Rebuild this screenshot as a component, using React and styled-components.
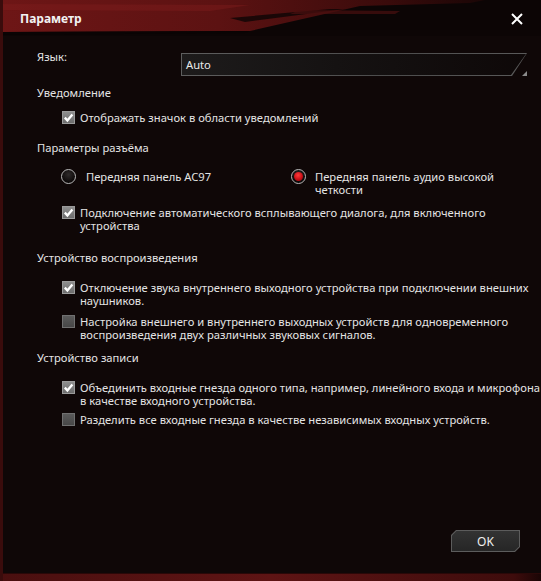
import React from "react";
import styled, { createGlobalStyle } from "styled-components";

const GlobalStyle = createGlobalStyle`
  html, body {
    margin: 0;
    background: #0f0707;
  }
`;

const Window = styled.div`
  width: 541px;
  height: 581px;
  box-sizing: border-box;
  display: flex;
  flex-direction: column;
  background: #0f0707;
  border-left: 3px solid #3a0c0c;
  font-family: "Noto Sans", "Open Sans", sans-serif;
  font-size: 11.2px;
  color: #e4e4e4;
  overflow: hidden;
`;

const TitleBar = styled.div`
  position: relative;
  height: 36px;
  flex-shrink: 0;
  display: flex;
  align-items: center;
  justify-content: space-between;
  margin-left: -3px;
  padding: 0 17px 0 20px;
`;

const TitleDeco = styled.svg`
  position: absolute;
  left: 0;
  top: 0;
  z-index: 0;
`;

const Title = styled.span`
  position: relative;
  z-index: 1;
  font-weight: 700;
  font-size: 12px;
  color: #f2f2f2;
  margin-top: 1px;
`;

const CloseButton = styled.button`
  position: relative;
  z-index: 1;
  width: 14px;
  height: 14px;
  padding: 0;
  border: 0;
  background: transparent;
  display: flex;
  margin-top: 2px;
  cursor: pointer;
`;

const Body = styled.div`
  flex: 1;
  display: flex;
  flex-direction: column;
  padding-left: 34px;
`;

const LangRow = styled.div`
  display: flex;
  margin-top: 17px;
`;

const LangLabel = styled.span`
  width: 144px;
  line-height: 13px;
  margin-top: -3px;
`;

const Select = styled.div`
  position: relative;
  width: 346px;
  height: 23px;
`;

const SelectFrame = styled.div`
  position: absolute;
  inset: 0;
  background: linear-gradient(to right, #5e5e5e, #4c4c4c 60%, #5a5a5a);
  clip-path: polygon(0 0, 100% 0, calc(100% - 15px) 100%, 0 100%);
`;

const SelectInner = styled.div`
  position: absolute;
  inset: 1px;
  background: linear-gradient(to right, #1d1b1b 0%, #151212 45%, #0e0808 100%);
  clip-path: polygon(0 0, 100% 0, calc(100% - 15px) 100%, 0 100%);
  display: flex;
  align-items: center;
  padding-left: 4px;
  color: #eaeaea;
`;

const SelectArrow = styled.div`
  position: absolute;
  right: 0;
  bottom: 0;
  width: 0;
  height: 0;
  border-left: 5px solid transparent;
  border-bottom: 5px solid #8a8a8a;
`;

const Heading = styled.div`
  line-height: 13px;
  margin-top: ${(p) => p.$top}px;
`;

const Row = styled.label`
  display: flex;
  gap: 5px;
  padding-left: 25px;
  line-height: 13px;
  margin-top: ${(p) => p.$top}px;
  white-space: nowrap;
`;

const Box = styled.span`
  width: 13px;
  height: 13px;
  flex-shrink: 0;
  box-sizing: border-box;
  display: flex;
  align-items: center;
  justify-content: center;
  border: 1px solid ${(p) => (p.$checked ? "#9a9a9a" : "#707070")};
  background: ${(p) =>
    p.$checked
      ? "linear-gradient(#8e8e8e, #6c6c6c)"
      : "linear-gradient(#5a5a5a, #474747)"};
`;

const RadioRow = styled.div`
  display: grid;
  grid-template-columns: 230px 1fr;
  padding-left: 24px;
  line-height: 13px;
  margin-top: ${(p) => p.$top}px;
  white-space: nowrap;
`;

const RadioOption = styled.label`
  display: flex;
  gap: ${(p) => p.$gap}px;
`;

const RadioDot = styled.span`
  width: 15px;
  height: 15px;
  flex-shrink: 0;
  box-sizing: border-box;
  margin-top: -1px;
  border-radius: 50%;
  border: 1.5px solid #b8b8b8;
  background: radial-gradient(circle at 50% 35%, #2e2a2a, #0c0808 70%);
  display: flex;
  align-items: center;
  justify-content: center;
`;

const RadioFill = styled.span`
  width: 9px;
  height: 9px;
  border-radius: 50%;
  background: radial-gradient(circle at 45% 35%, #ff3a3a, #c40c14 60%, #8a0008);
`;

const Footer = styled.div`
  margin-top: auto;
  display: flex;
  justify-content: flex-end;
  padding: 0 21px 21px 0;
`;

const OkButton = styled.button`
  position: relative;
  width: 69px;
  height: 22px;
  padding: 0;
  border: 0;
  background: #5c5c5c;
  clip-path: polygon(5px 0, 100% 0, 100% calc(100% - 5px), calc(100% - 5px) 100%, 0 100%, 0 5px);
  cursor: pointer;
`;

const OkFace = styled.span`
  position: absolute;
  inset: 1px;
  display: flex;
  align-items: center;
  justify-content: center;
  background: linear-gradient(#333, #262626);
  clip-path: polygon(4.5px 0, 100% 0, 100% calc(100% - 4.5px), calc(100% - 4.5px) 100%, 0 100%, 0 4.5px);
  font-family: "Noto Sans", sans-serif;
  font-size: 12px;
  color: #f0f0f0;
`;

const BottomBand = styled.div`
  height: 7px;
  flex-shrink: 0;
  margin-left: -3px;
  background: linear-gradient(to right, #4a0f0f, #5e1414 50%, #3e0c0c 95%, #1a0505);
  border-top: 1px solid #2a0808;
`;

const Check = ({ checked }) => (
  <Box $checked={checked}>
    {checked && (
      <svg width="11" height="11" viewBox="0 0 11 11">
        <path d="M1.8 5.6 L4.4 8.4 L9.4 2.4" fill="none" stroke="#fff" strokeWidth="2.3" />
      </svg>
    )}
  </Box>
);

const CheckRow = ({ top, checked, children }) => (
  <Row $top={top}>
    <Check checked={checked} />
    <span>{children}</span>
  </Row>
);

export default function App() {
  return (
    <>
      <GlobalStyle />
      <Window>
        <TitleBar>
          <TitleDeco width="541" height="36" viewBox="0 0 541 36">
            <defs>
              <linearGradient id="red" x1="0" x2="1" y1="0" y2="0">
                <stop offset="0" stopColor="#6e1616" />
                <stop offset="0.45" stopColor="#5c1212" />
                <stop offset="0.8" stopColor="#3a0b0b" />
                <stop offset="1" stopColor="#1a0606" />
              </linearGradient>
            </defs>
            <rect width="541" height="36" fill="#0c0505" />
            <polygon points="0,0 485,0 470,3 360,6 250,31 0,32" fill="url(#red)" />
            <polygon points="0,4 250,5 210,11 0,10" fill="#7e1c1c" opacity="0.45" />
            <polygon points="230,18 330,9 345,9 245,22" fill="#0c0505" opacity="0.8" />
            <polygon points="300,10 400,11 395,14 290,14" fill="#4a1010" opacity="0.7" />
            <polygon points="0,32 250,31 246,33 0,35" fill="#0a0404" />
          </TitleDeco>
          <Title>Параметр</Title>
          <CloseButton aria-label="Закрыть">
            <svg width="14" height="14" viewBox="0 0 14 14">
              <path d="M2 2 L12 12 M12 2 L2 12" stroke="#fff" strokeWidth="2" />
            </svg>
          </CloseButton>
        </TitleBar>

        <Body>
          <LangRow>
            <LangLabel>Язык:</LangLabel>
            <Select>
              <SelectFrame />
              <SelectInner>Auto</SelectInner>
              <SelectArrow />
            </Select>
          </LangRow>

          <Heading $top={10}>Уведомление</Heading>
          <CheckRow top={12} checked>
            Отображать значок в области уведомлений
          </CheckRow>

          <Heading $top={17}>Параметры разъёма</Heading>
          <RadioRow $top={16}>
            <RadioOption $gap={10}>
              <RadioDot />
              <span>Передняя панель AC97</span>
            </RadioOption>
            <RadioOption $gap={9}>
              <RadioDot>
                <RadioFill />
              </RadioDot>
              <span>
                Передняя панель аудио высокой
                <br />
                четкости
              </span>
            </RadioOption>
          </RadioRow>
          <CheckRow top={10} checked>
            Подключение автоматического всплывающего диалога, для включенного
            <br />
            устройства
          </CheckRow>

          <Heading $top={19}>Устройство воспроизведения</Heading>
          <CheckRow top={17} checked>
            Отключение звука внутреннего выходного устройства при подключении внешних
            <br />
            наушников.
          </CheckRow>
          <CheckRow top={8}>
            Настройка внешнего и внутреннего выходных устройств для одновременного
            <br />
            воспроизведения двух различных звуковых сигналов.
          </CheckRow>

          <Heading $top={10}>Устройство записи</Heading>
          <CheckRow top={17} checked>
            Объединить входные гнезда одного типа, например, линейного входа и микрофона
            <br />
            в качестве входного устройства.
          </CheckRow>
          <CheckRow top={6}>
            Разделить все входные гнезда в качестве независимых входных устройств.
          </CheckRow>

          <Footer>
            <OkButton>
              <OkFace>OK</OkFace>
            </OkButton>
          </Footer>
        </Body>
        <BottomBand />
      </Window>
    </>
  );
}
